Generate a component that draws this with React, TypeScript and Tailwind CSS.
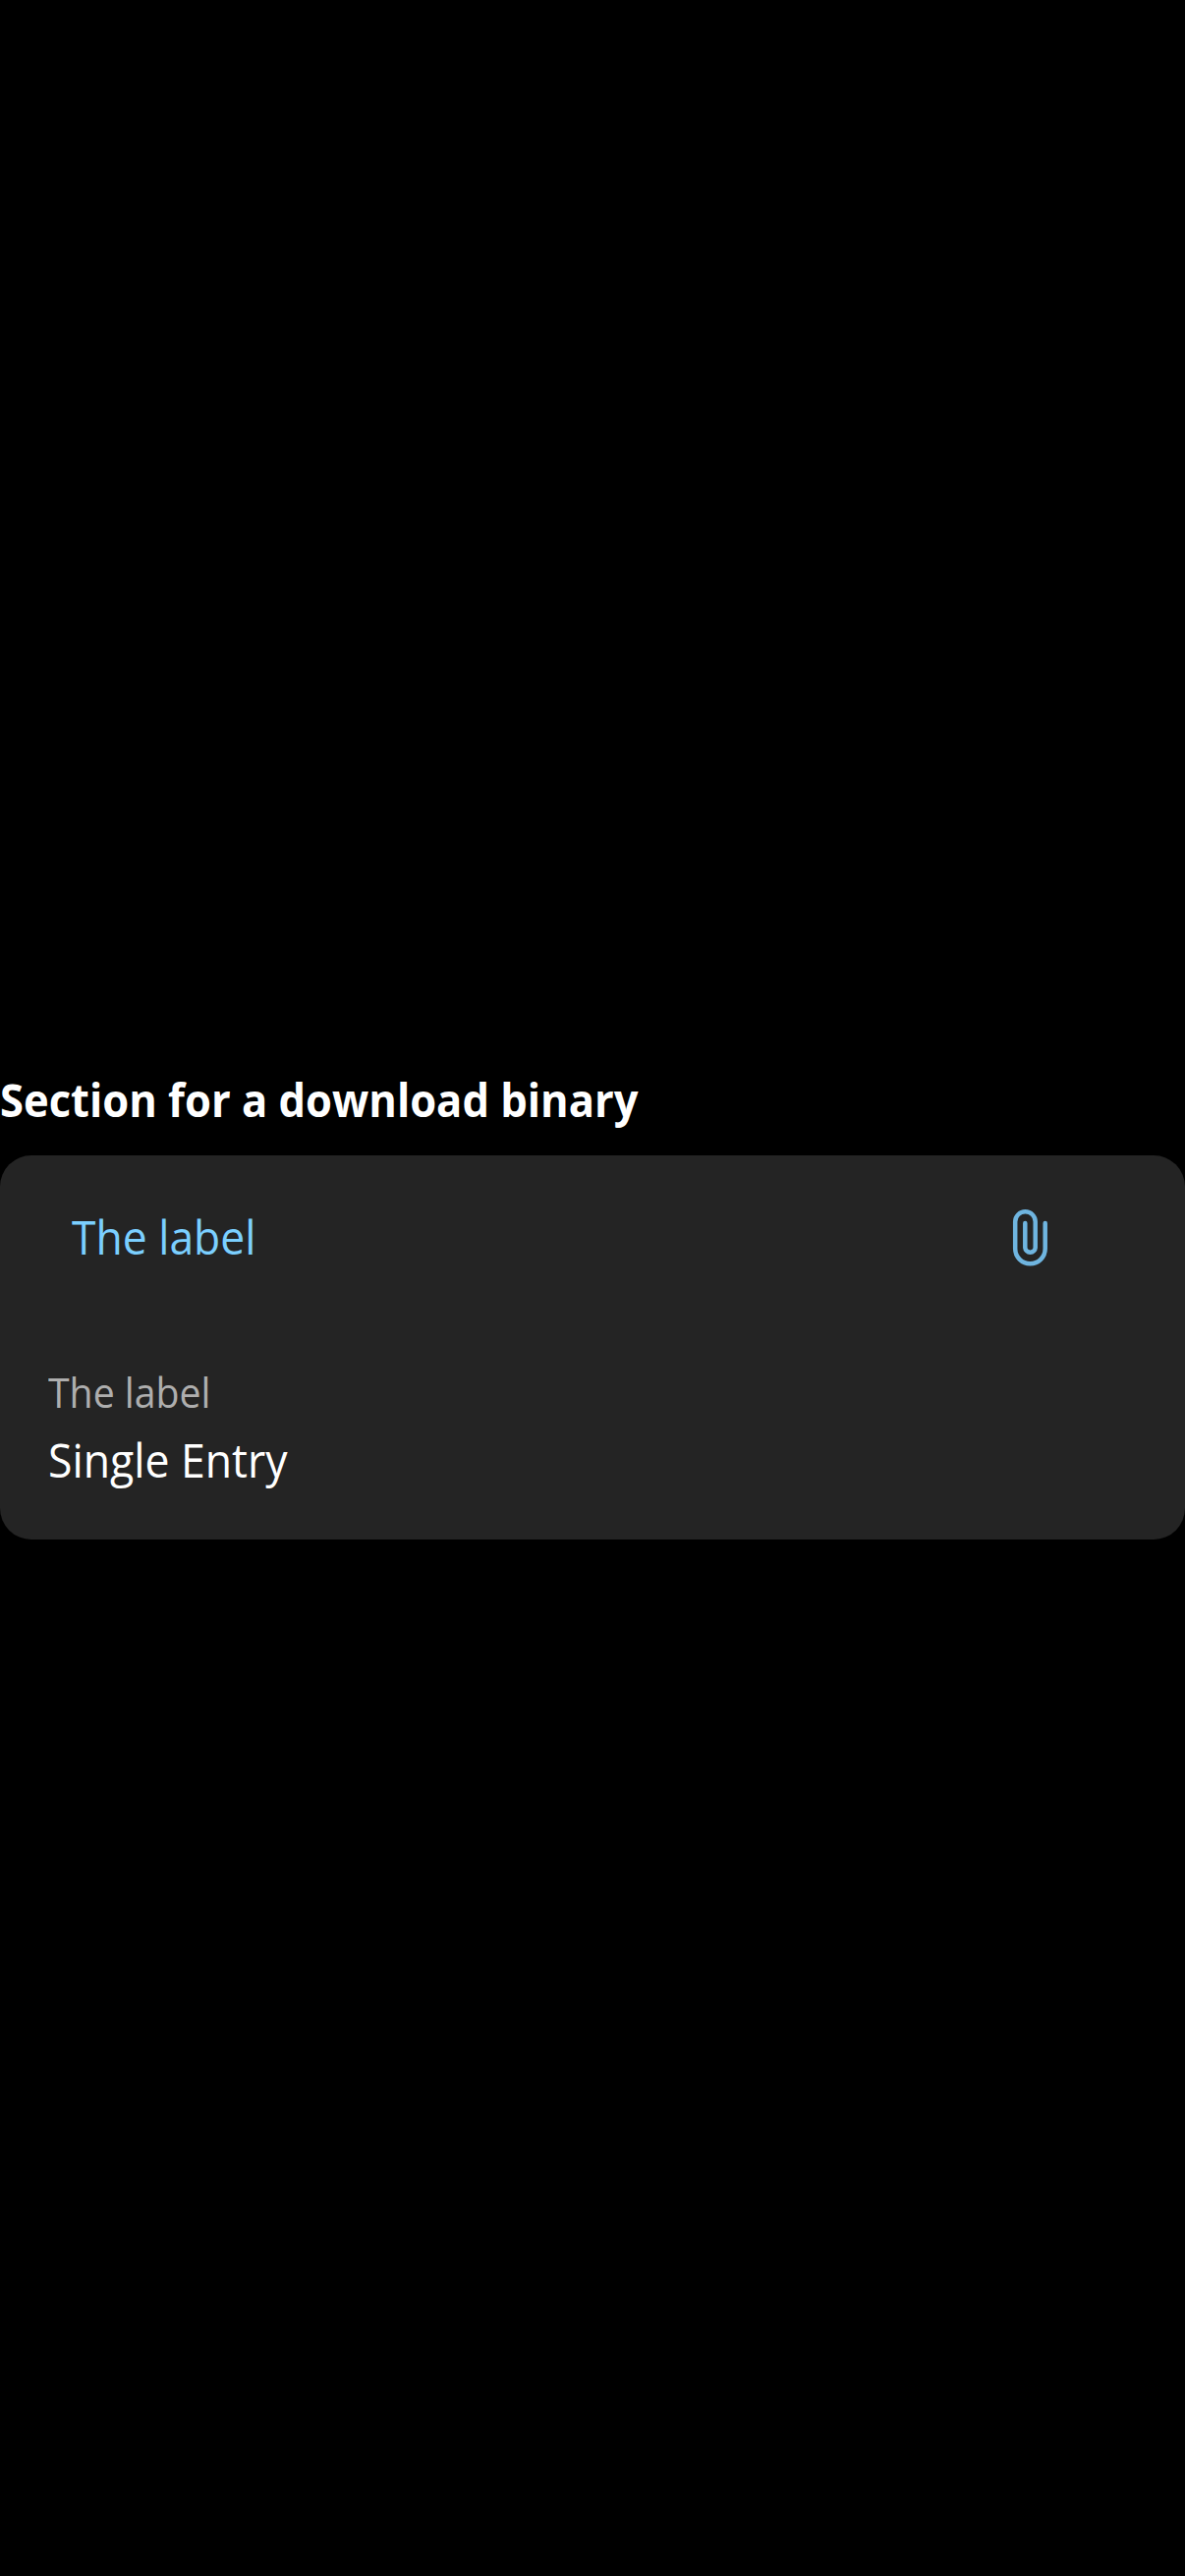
function Paperclip() {
  return (
    <svg viewBox="1024 1220 48 72" className="mb-[8px] h-[72px] w-12 shrink-0" fill="none" stroke="#6fb5e0" strokeWidth="4.5" strokeLinecap="round" aria-hidden="true">
      <path d="M1063.7 1245.1V1271.05a15.25 15.25 0 0 1-30.5 0V1243.5a10.25 10.25 0 0 1 20.5 0V1269.5a5.2 5.2 0 0 1-10.4 0V1245.1" />
    </svg>
  );
}

export default function App() {
  return (
    <main className="h-[2622px] w-[1206px] bg-black pt-[1086px] font-['Open_Sans',sans-serif] whitespace-nowrap text-white">
      <h1 className="h-[90px] text-[47px] leading-[66px] font-bold">
        <span className="inline-block origin-left scale-x-[0.926]">Section for a download binary</span>
      </h1>
      <section className="h-[391px] rounded-[32px] bg-[#242424]">
        <div className="flex h-[168px] items-center pl-[73px]">
          <span className="mb-[2px] w-[951px] text-[47px] leading-[66px] text-[#7bcfff]">
            <span className="inline-block origin-left scale-x-[0.945]">The label</span>
          </span>
          <Paperclip />
        </div>
        <div className="pt-[43px] pl-[49px]">
          <p className="text-[41.5px] leading-[60px] text-[#aeaeae]">
            <span className="inline-block origin-left scale-x-[0.945]">The label</span>
          </p>
          <p className="mt-[6px] text-[47px] leading-[66px]">
            <span className="inline-block origin-left scale-x-[0.948]">Single Entry</span>
          </p>
        </div>
      </section>
    </main>
  );
}
